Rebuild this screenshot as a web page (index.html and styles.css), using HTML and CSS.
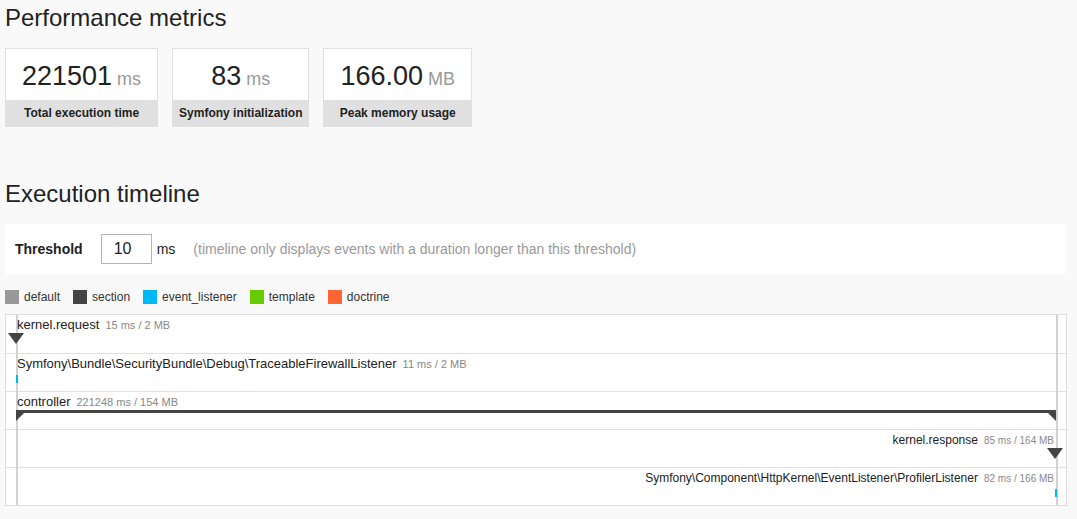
FILE: index.html
```html
<!DOCTYPE html>
<html lang="en">
<head>
<meta charset="utf-8">
<title>Performance metrics</title>
<link rel="stylesheet" href="styles.css">
</head>
<body>
<div class="page">
  <h2 class="title">Performance metrics</h2>
  <div class="metrics">
    <div class="metric">
      <div class="metric-value">221501<span class="unit">ms</span></div>
      <div class="metric-label">Total execution time</div>
    </div>
    <div class="metric">
      <div class="metric-value">83<span class="unit">ms</span></div>
      <div class="metric-label">Symfony initialization</div>
    </div>
    <div class="metric">
      <div class="metric-value">166.00<span class="unit">MB</span></div>
      <div class="metric-label">Peak memory usage</div>
    </div>
  </div>

  <h2 class="title title-timeline">Execution timeline</h2>
  <div class="threshold">
    <label class="threshold-label" for="threshold">Threshold</label>
    <input class="threshold-input" id="threshold" type="text" value="10">
    <span class="threshold-unit">ms</span>
    <span class="threshold-help">(timeline only displays events with a duration longer than this threshold)</span>
  </div>

  <div class="legend">
    <span class="legend-item"><span class="swatch c-default"></span>default</span>
    <span class="legend-item"><span class="swatch c-section"></span>section</span>
    <span class="legend-item"><span class="swatch c-listener"></span>event_listener</span>
    <span class="legend-item"><span class="swatch c-template"></span>template</span>
    <span class="legend-item"><span class="swatch c-doctrine"></span>doctrine</span>
  </div>

  <div class="timeline">
    <div class="guide guide-start"></div>
    <div class="guide guide-end"></div>

    <div class="row row-first">
      <div class="lane">
        <div class="event-label">kernel.request<span class="event-meta">15 ms / 2 MB</span></div>
        <div class="tri-down" style="left: 0%"></div>
      </div>
    </div>

    <div class="row">
      <div class="lane">
        <div class="event-label">Symfony\Bundle\SecurityBundle\Debug\TraceableFirewallListener<span class="event-meta">11 ms / 2 MB</span></div>
        <div class="bar bar-listener" style="left: 0%"></div>
      </div>
    </div>

    <div class="row">
      <div class="lane">
        <div class="event-label">controller<span class="event-meta">221248 ms / 154 MB</span></div>
        <div class="section-bar" style="left: 0%; width: 100%"></div>
        <div class="corner corner-left"></div>
        <div class="corner corner-right"></div>
      </div>
    </div>

    <div class="row">
      <div class="lane">
        <div class="event-label event-label-end">kernel.response<span class="event-meta">85 ms / 164 MB</span></div>
        <div class="tri-down tri-end"></div>
      </div>
    </div>

    <div class="row">
      <div class="lane">
        <div class="event-label event-label-end">Symfony\Component\HttpKernel\EventListener\ProfilerListener<span class="event-meta">82 ms / 166 MB</span></div>
        <div class="bar bar-listener bar-end"></div>
      </div>
    </div>
  </div>
</div>
</body>
</html>
```

FILE: styles.css
```css
* {
  box-sizing: border-box;
}

body {
  margin: 0;
  background: #f9f9f9;
  font-family: "Liberation Sans", Arial, sans-serif;
  color: #222;
}

.page {
  padding: 4px 10px 0 5px;
}

.title {
  margin: 0;
  font-size: 24px;
  font-weight: normal;
  line-height: 28px;
  color: #222;
}

.title-timeline {
  margin-top: 53px;
}

/* metrics */
.metrics {
  display: flex;
  gap: 14px;
  margin-top: 16px;
}

.metric {
  display: flex;
  flex-direction: column;
  background: #fff;
  border: 1px solid #e0e0e0;
}

.metric-value {
  height: 51px;
  padding: 4px 16px 0;
  line-height: 47px;
  font-size: 27px;
  text-align: center;
  white-space: nowrap;
  color: #222;
}

.unit {
  margin-left: 5px;
  font-size: 18px;
  color: #999;
}

.metric-label {
  height: 26px;
  padding: 0 6px;
  line-height: 26px;
  background: #e0e0e0;
  font-size: 12px;
  font-weight: bold;
  text-align: center;
  white-space: nowrap;
  color: #222;
}

/* threshold */
.threshold {
  display: flex;
  align-items: center;
  height: 50px;
  margin-top: 16px;
  margin-right: 1px;
  padding-left: 10px;
  background: #fff;
  font-size: 14px;
}

.threshold-label {
  margin-right: 18px;
  font-size: 14px;
  font-weight: bold;
  color: #222;
}

.threshold-input {
  width: 51px;
  height: 30px;
  margin: 0;
  padding: 0 0 0 12px;
  border: 1px solid #b4b4b4;
  border-radius: 0;
  background: #fff;
  font-family: "Liberation Sans", Arial, sans-serif;
  font-size: 16px;
  color: #222;
  outline: none;
}

.threshold-unit {
  margin-left: 5px;
  color: #222;
}

.threshold-help {
  margin-left: 18px;
  color: #999;
}

/* legend */
.legend {
  display: flex;
  gap: 13px;
  margin-top: 16px;
  height: 14px;
}

.legend-item {
  display: flex;
  align-items: center;
  height: 14px;
  font-size: 12px;
  line-height: 14px;
  color: #333;
}

.swatch {
  width: 14px;
  height: 14px;
  margin-right: 5px;
}

.c-default { background: #999; }
.c-section { background: #444; }
.c-listener { background: #00b8f5; }
.c-template { background: #66cc00; }
.c-doctrine { background: #ff6633; }

/* timeline */
.timeline {
  position: relative;
  margin-top: 10px;
  background: #fff;
  border: 1px solid #ddd;
}

.guide {
  position: absolute;
  top: 0;
  bottom: 0;
  width: 2px;
  background: #d2d2d2;
  z-index: 1;
}

.guide-start {
  left: 10px;
}

.guide-end {
  right: 8px;
}

.row {
  height: 38px;
  padding: 0 10px;
  border-top: 1px solid #e0e0e0;
}

.row-first {
  border-top: none;
}

.lane {
  position: relative;
  height: 100%;
}

.event-label {
  position: absolute;
  top: 2px;
  left: 1px;
  font-size: 13px;
  line-height: 16px;
  white-space: nowrap;
  color: #222;
  z-index: 2;
}

.event-meta {
  margin-left: 6px;
  font-size: 11px;
  color: #888;
}

.event-label-end {
  left: auto;
  right: 2px;
  font-size: 12px;
}

.event-label-end .event-meta {
  font-size: 10px;
}

.tri-down {
  position: absolute;
  top: 18px;
  width: 0;
  height: 0;
  margin-left: -8px;
  border-left: 8px solid transparent;
  border-right: 8px solid transparent;
  border-top: 11px solid #444;
  z-index: 3;
}

.tri-end {
  left: calc(100% - 1px);
}

.bar {
  position: absolute;
  top: 21px;
  width: 2px;
  height: 8px;
  z-index: 3;
}

.bar-listener {
  background: #00b8f5;
}

.bar-end {
  left: calc(100% - 1px);
}

.section-bar {
  position: absolute;
  top: 18px;
  height: 3px;
  background: #444;
  z-index: 3;
}

.corner {
  position: absolute;
  top: 21px;
  width: 0;
  height: 0;
  border-top: 8px solid #444;
  z-index: 3;
}

.corner-left {
  left: 0;
  border-right: 8px solid transparent;
}

.corner-right {
  right: 0;
  border-left: 8px solid transparent;
}
```
